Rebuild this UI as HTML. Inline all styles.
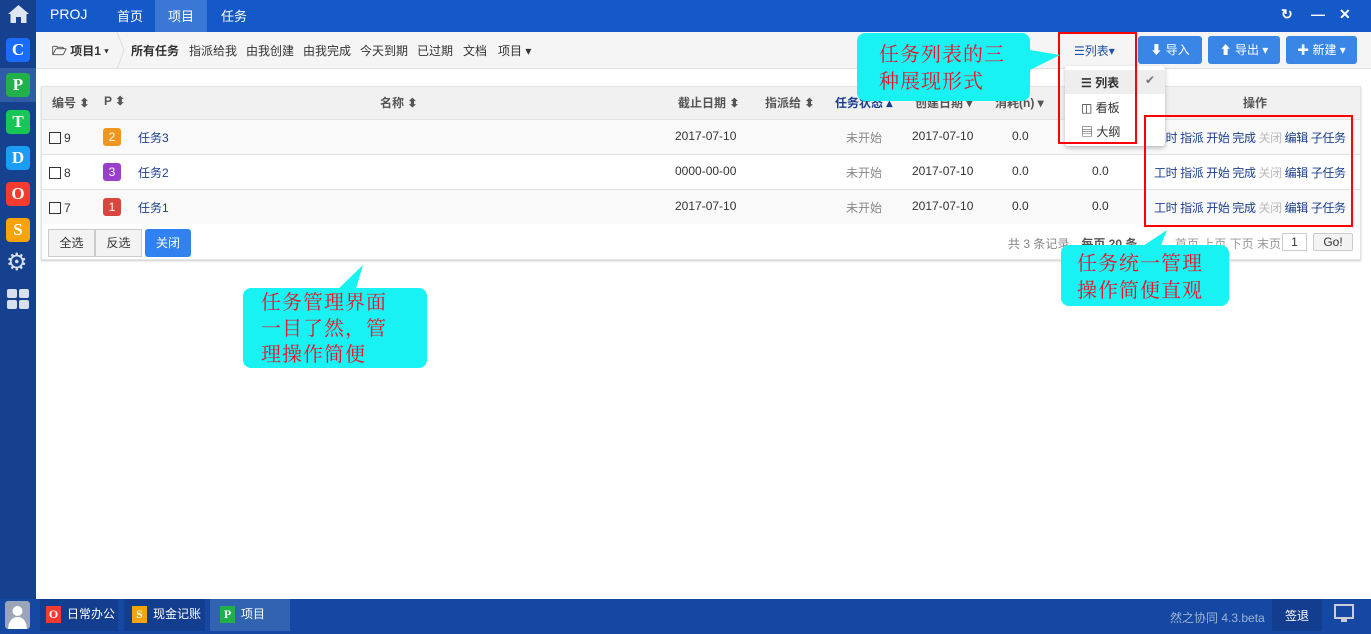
<!DOCTYPE html>
<html><head><meta charset="utf-8"><style>
*{box-sizing:border-box;margin:0;padding:0}
body{width:1371px;height:634px;overflow:hidden;background:#fff;font-family:"Liberation Sans","Noto Sans CJK SC",sans-serif;font-size:12px;color:#333;position:relative}
.abs{position:absolute}
#side{left:0;top:0;width:36px;height:634px;background:#15418f}
.ic{position:absolute;left:6px;width:24px;height:24px;border-radius:4px;color:#fff;font:bold 17px "Liberation Serif",serif;text-align:center;line-height:24px}
#top{left:36px;top:0;width:1335px;height:32px;background:#1559c8;color:#fff;font-size:14px}
#top span{position:absolute;top:6px}
#tb{left:36px;top:32px;width:1335px;height:37px;background:#f5f5f5;border-bottom:1px solid #e2e2e2}
#tb span{position:absolute;top:10px;font-size:12px;color:#333}
.btn{position:absolute;top:36px;height:28px;background:#3a86e6;border-radius:3px;color:#fff;font-size:12px;line-height:28px;text-align:center}
#tbl{left:41px;top:86px;width:1320px;height:174px;border:1px solid #e4e4e4;box-shadow:0 1px 2px #ccc}
.row{position:absolute;left:0;width:1318px;height:35px;border-top:1px solid #e2e2e2}
.row span,.hd span{position:absolute;top:9px}
.hd{position:absolute;left:0;top:0;width:1318px;height:32px;background:#f1f1f1}
.hd span{top:7px;font-weight:bold;color:#555}
.pri{width:18px;height:18px;border-radius:3px;color:#fff;text-align:center;line-height:18px;top:8px!important}
.cb{width:12px;height:12px;border:1px solid #333;top:12px!important}
.blue{color:#1a3e8f}
.g{color:#888}
.ops{color:#1a3e8f;letter-spacing:-0.4px;white-space:nowrap}
.ops i{font-style:normal;color:#bbb}
.call{position:absolute;background:#19f2f2;border-radius:8px;color:#e8132a;font:20px "Noto Serif CJK SC","WenQuanYi Zen Hei",serif;line-height:27px;padding:6px 18px;letter-spacing:1px}
.red{position:absolute;border:2px solid #f00}
#bot{left:0;top:599px;width:1371px;height:35px;background:#1448a3}
.tab{position:absolute;top:0;height:32px;color:#fff;font-size:12px;line-height:30px}
.sq{display:inline-block;width:15px;height:17px;vertical-align:middle;margin-right:6px;color:#fff;font:bold 12px serif;text-align:center;line-height:17px}
</style></head><body>
<div id="side" class="abs">
 <svg class="abs" style="left:7px;top:4px" width="23" height="20" viewBox="0 0 23 20"><path d="M11.5 1 L1 10 L3.5 10 L3.5 19 L9 19 L9 13 L14 13 L14 19 L19.5 19 L19.5 10 L22 10 Z" fill="#dfe6f2"/></svg>
 <div class="abs" style="left:0;top:68px;width:36px;height:34px;background:#2f5ca5"></div>
 <div class="ic" style="top:38px;background:#1a6cff">C</div>
 <div class="ic" style="top:73px;background:#22b04b">P</div>
 <div class="ic" style="top:110px;background:#17c655">T</div>
 <div class="ic" style="top:146px;background:#1a9df2">D</div>
 <div class="ic" style="top:182px;background:#f33b2f">O</div>
 <div class="ic" style="top:218px;background:#f7a30a">S</div>
 <div class="abs" style="left:6px;top:251px;color:#d8e0ee;font-size:24px;line-height:24px">⚙</div>
 <svg class="abs" style="left:7px;top:289px" width="23" height="20"><rect x="0" y="0" width="10" height="9" rx="2" fill="#d8e0ee"/><rect x="12" y="0" width="10" height="9" rx="2" fill="#d8e0ee"/><rect x="0" y="11" width="10" height="9" rx="2" fill="#d8e0ee"/><rect x="12" y="11" width="10" height="9" rx="2" fill="#d8e0ee"/></svg>
</div>
<div id="top" class="abs">
 <div class="abs" style="left:119px;top:0;width:52px;height:32px;background:#3b78d5"></div>
 <span style="left:14px">PROJ</span><span style="left:81px;font-size:13px">首页</span><span style="left:132px;font-size:13px">项目</span><span style="left:185px;font-size:13px">任务</span>
 <span style="left:1245px;font-weight:bold">↻</span><span style="left:1275px;font-weight:bold">—</span><span style="left:1303px;font-weight:bold">✕</span>
</div>
<div id="tb" class="abs">
 <span style="left:16px;font-weight:bold">🗁 项目1 ▾</span>
 <svg class="abs" style="left:80px;top:0" width="10" height="37"><path d="M1 0 L8 18 L1 37" stroke="#ddd" fill="none"/></svg>
 <span style="left:95px;font-weight:bold">所有任务</span><span style="left:153px">指派给我</span><span style="left:210px">由我创建</span><span style="left:267px">由我完成</span><span style="left:324px">今天到期</span><span style="left:381px">已过期</span><span style="left:427px">文档</span><span style="left:462px">项目 ▾</span>
 <span style="left:1038px;color:#1a4ea8">☰列表▾</span>
</div>
<div class="btn" style="left:1138px;width:64px">⬇ 导入</div>
<div class="btn" style="left:1208px;width:72px">⬆ 导出 ▾</div>
<div class="btn" style="left:1286px;width:71px">✚ 新建 ▾</div>
<div id="tbl" class="abs">
 <div class="hd"><span style="left:10px">编号 ⬍</span><span style="left:62px">P ⬍</span><span style="left:338px">名称 ⬍</span><span style="left:636px">截止日期 ⬍</span><span style="left:723px">指派给 ⬍</span><span style="left:793px;color:#1a3e8f">任务状态 ▴</span><span style="left:873px">创建日期 ▾</span><span style="left:953px">消耗(h) ▾</span><span style="left:1201px">操作</span></div>
 <div class="row" style="top:32px;background:#f9f9f9"><span class="cb" style="left:7px"></span><span style="left:22px;top:11px">9</span><span class="pri" style="left:61px;background:#f0961f">2</span><span class="blue" style="left:96px">任务3</span><span style="left:633px">2017-07-10</span><span class="g" style="left:804px">未开始</span><span style="left:870px">2017-07-10</span><span style="left:970px">0.0</span><span class="ops" style="left:1112px">工时 指派 开始 完成 <i>关闭</i> 编辑 子任务</span></div>
 <div class="row" style="top:67px"><span class="cb" style="left:7px"></span><span style="left:22px;top:11px">8</span><span class="pri" style="left:61px;background:#9a3fc9">3</span><span class="blue" style="left:96px">任务2</span><span style="left:633px">0000-00-00</span><span class="g" style="left:804px">未开始</span><span style="left:870px">2017-07-10</span><span style="left:970px">0.0</span><span style="left:1050px">0.0</span><span class="ops" style="left:1112px">工时 指派 开始 完成 <i>关闭</i> 编辑 子任务</span></div>
 <div class="row" style="top:102px;background:#f9f9f9"><span class="cb" style="left:7px"></span><span style="left:22px;top:11px">7</span><span class="pri" style="left:61px;background:#d9463f">1</span><span class="blue" style="left:96px">任务1</span><span style="left:633px">2017-07-10</span><span class="g" style="left:804px">未开始</span><span style="left:870px">2017-07-10</span><span style="left:970px">0.0</span><span style="left:1050px">0.0</span><span class="ops" style="left:1112px">工时 指派 开始 完成 <i>关闭</i> 编辑 子任务</span></div>
 <div class="abs" style="left:6px;top:142px;width:47px;height:28px;border:1px solid #ccc;background:#f3f3f3;text-align:center;line-height:26px">全选</div>
 <div class="abs" style="left:53px;top:142px;width:47px;height:28px;border:1px solid #ccc;background:#f3f3f3;text-align:center;line-height:26px">反选</div>
 <div class="abs" style="left:103px;top:142px;width:46px;height:28px;background:#3182f0;border-radius:3px;color:#fff;text-align:center;line-height:28px">关闭</div>
 <span class="abs" style="left:966px;top:148px;color:#888">共 3 条记录，<b style="color:#555">每页 20 条</b></span>
 <span class="abs" style="left:1133px;top:148px;color:#999">首页 上页 下页 末页</span>
 <div class="abs" style="left:1240px;top:146px;width:25px;height:18px;border:1px solid #ccc;text-align:center;line-height:16px">1</div>
 <div class="abs" style="left:1271px;top:146px;width:40px;height:18px;border:1px solid #ccc;background:#f3f3f3;text-align:center;line-height:16px;border-radius:2px">Go!</div>
</div>
<div class="abs" style="left:1065px;top:66px;width:100px;height:80px;background:#fff;box-shadow:0 2px 5px rgba(0,0,0,.25);border-radius:3px">
 <div class="abs" style="left:0;top:4px;width:100px;height:24px;background:#eee"></div>
 <span class="abs" style="left:16px;top:8px;font-weight:bold">☰ 列表</span><span class="abs" style="left:80px;top:7px;color:#777">✔</span>
 <span class="abs" style="left:16px;top:33px">◫ 看板</span>
 <span class="abs" style="left:16px;top:57px">▤ 大纲</span>
</div>
<div class="red" style="left:1058px;top:32px;width:79px;height:112px"></div>
<div class="red" style="left:1144px;top:115px;width:209px;height:112px"></div>
<div class="abs" style="left:0;top:0;width:1371px;height:634px;pointer-events:none">
 <svg class="abs" style="left:0;top:0" width="1371" height="634"><polygon points="1000,45 1060,55 1000,85" fill="#19f2f2"/><polygon points="335,292 363,265 355,292" fill="#19f2f2"/><polygon points="1140,248 1167,230 1160,248" fill="#19f2f2"/></svg>
</div>
<div class="call" style="left:857px;top:33px;width:173px;height:68px;padding:6px 22px">任务列表的三<br>种展现形式</div>
<div class="call" style="left:243px;top:288px;width:184px;height:80px;padding:0 18px;line-height:26px">任务管理界面<br>一目了然，管<br>理操作简便</div>
<div class="call" style="left:1061px;top:245px;width:168px;height:61px;padding:3px 16px;line-height:27px">任务统一管理<br>操作简便直观</div>
<div id="bot" class="abs">
 <svg class="abs" style="left:5px;top:2px" width="25" height="28"><rect width="25" height="28" rx="3" fill="#9aa5b8"/><circle cx="12.5" cy="10" r="5" fill="#fff"/><path d="M3 28 Q4 16 12.5 16 Q21 16 22 28Z" fill="#fff"/></svg>
 <div class="tab" style="left:40px;width:78px;background:#133d8e;padding-left:6px"><span class="sq" style="background:#f33b2f">O</span>日常办公</div>
 <div class="tab" style="left:124px;width:81px;background:#133d8e;padding-left:8px"><span class="sq" style="background:#f7a30a">S</span>现金记账</div>
 <div class="tab" style="left:210px;width:80px;background:#3163b0;padding-left:10px"><span class="sq" style="background:#22b04b">P</span>项目</div>
 <span class="abs" style="left:1170px;top:10px;color:#9fb3d6">然之协同 4.3.beta</span>
 <div class="abs" style="left:1272px;top:0;width:50px;height:32px;background:#133d8e"></div>
 <span class="abs" style="left:1285px;top:8px;color:#fff">签退</span>
 <svg class="abs" style="left:1334px;top:5px" width="20" height="20"><rect x="1" y="1" width="18" height="13" fill="none" stroke="#ccd" stroke-width="2"/><rect x="7" y="15" width="6" height="3" fill="#ccd"/></svg>
</div>
</body></html>
